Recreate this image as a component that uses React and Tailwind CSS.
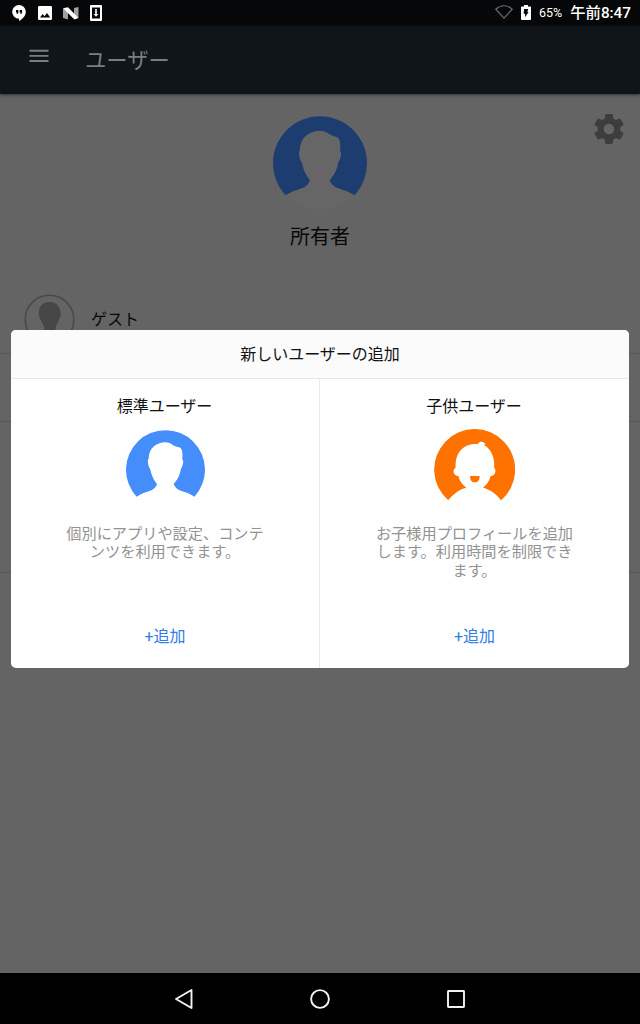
import React from "react";

function Person({ className, disc }) {
  return (
    <svg viewBox="39 47 282 282" className={className}>
      {disc && <circle cx="180" cy="188" r="141" fill="#666666" />}
      <path
        fill="currentColor"
        d="M77 285 A141 141 0 1 1 283 285 C268 275 250 268 232 263 C220 259 213 250 209 240 C218 230 227 216 231 203 C233 197 234 191 235 185 C238 182 240 177 241 172 C243 166 243 161 243 157 C243 154 241 152 240 151 C241 140 241 130 239 122 C237 114 233 110 228 109 C222 108 219 106 216 106 C214 104 211 102 208 102 C200 94 190 91 180 91 C163 91 148 97 138 106 C125 117 120 132 120 150 C118 151 117 153 117 157 C117 162 118 168 119 173 C120 178 122 182 125 185 C127 191 128 198 130 204 C134 218 142 230 150 240 C146 250 140 259 128 263 C110 268 92 275 77 285 Z"
      />
    </svg>
  );
}

function Child({ className }) {
  return (
    <svg viewBox="74 148 240 240" className={className} fill="currentColor">
      <path d="M116 359 A120 120 0 1 1 273 359 C259 341 242 328 219 321 C230 314 239 301 241 288 C250 287 256 280 256 273 C256 269 255 266 252 263 C253 250 252 238 249 230 C244 213 234 202 221 195 L227 193 C223 187 215 184 209 187 C205 189 204 192 204 193 C184 190 164 198 151 213 C140 226 137 244 138 263 C134 266 132 269 132 273 C132 281 139 287 147 288 C149 301 158 314 170 321 C148 327 131 341 116 359 Z" />
      <path d="M181 287 H209 C210 299 204 306 195 306 S180 299 181 287 Z" />
    </svg>
  );
}

function StatusBar() {
  return (
    <div className="flex h-[26px] shrink-0 items-center bg-[#060708] pl-[12px] pr-[9px] text-white">
      <svg width="14" height="16" viewBox="0 0 14 16">
        <path fill="#fff" d="M7 0A6.8 6.8 0 0 0 7 13.7V16C10.8 14 13.8 10.8 13.8 6.8A6.8 6.8 0 0 0 7 0Z" />
        <path fill="#060708" d="M4 5h2.4v2.4L5.5 9h-1l.5-1.6H4zM7.7 5h2.4v2.4L9.2 9h-1l.5-1.6h-1z" />
      </svg>
      <svg width="14" height="14" viewBox="0 0 14 14" className="ml-[12px]">
        <rect width="14" height="14" rx="1.3" fill="#fff" />
        <path fill="#060708" d="M2 11.5 4.7 8l1.8 2.2L9 7l3.2 4.500z" />
      </svg>
      <svg width="16" height="13" viewBox="0 0 16 13" className="ml-[11px]">
        <path fill="#a0a0a0" d="M0 1.500 5 4v8.500L0 11zM11 1 15.500 0v11L11 9z" />
        <path fill="#fff" d="M0 1.300 5 .2 15.500 11 11.500 12.600z" />
      </svg>
      <svg width="12" height="16" viewBox="0 0 12 16" className="ml-[11px]">
        <rect width="12" height="16" rx="1" fill="#fff" />
        <path fill="#060708" d="M2 2.500h8v11H2z" />
        <path fill="#fff" d="M5.200 4h1.600v5h1.700L6 11.700 3.500 9h1.700z" />
      </svg>
      <svg width="18" height="14" viewBox="0 0 18 14" className="-mt-[2px] ml-auto" fill="none" stroke="#6b6b6b" strokeWidth="1.200">
        <path d="M.8 4.200C5.800-.4 12.200-.4 17.200 4.200L9 13.200Z" />
      </svg>
      <svg width="10" height="15" viewBox="0 0 10 15" className="-mt-[2px] ml-[8px]">
        <path fill="#fff" d="M3 0h4v1.400h2.200q.8 0 .8.8v12q0 .8-.8.8H.8q-.8 0-.8-.8V2.200q0-.8.8-.8H3z" />
        <path fill="#060708" d="M3 4h4.200L6.400 7h1.200L4.100 12.300V8.700H2.700z" />
      </svg>
      <span className="mt-px ml-[8px] text-[12.500px] leading-none">65%</span>
      <span className="mt-px ml-[8px] text-[15.300px] leading-none font-medium whitespace-nowrap">午前8:47</span>
    </div>
  );
}

function Header() {
  return (
    <header className="relative flex h-[68px] shrink-0 items-center bg-[#0f1518] pl-[29px] text-[#7b7e80] shadow-[0_1px_3px_#333]">
      <svg width="20" height="14" viewBox="0 0 20 14" className="-mt-[8px]" fill="currentColor">
        <path d="M.5 .8h19v1.900H.5zM.5 5.900h19v1.900H.5zM.5 11h19v1.900H.5z" />
      </svg>
      <h1 className="mt-[2px] ml-[36px] text-[21.300px] leading-none font-normal">ユーザー</h1>
    </header>
  );
}

function UserOption({ title, icon, lines, className }) {
  return (
    <section className={`flex flex-col items-center ${className}`}>
      <h3 className="mt-[17px] text-[16px] leading-[22px] text-[#111]">{title}</h3>
      <div className="mt-[11px] flex h-[82px] items-start justify-center">{icon}</div>
      <p className="mt-[14px] h-[60px] pl-px text-center text-[15.200px] leading-[18.300px] whitespace-nowrap text-[#929292]">
        {lines.map((line) => (
          <span key={line} className="block">{line}</span>
        ))}
      </p>
      <button className="mt-[41px] pl-px text-[16px] leading-[22px] text-[#2f7ee8]">+追加</button>
    </section>
  );
}

function AddUserDialog() {
  return (
    <div className="absolute top-[330px] left-[11px] flex h-[338px] w-[618px] flex-col overflow-hidden rounded-[5px] bg-white">
      <h2 className="flex h-[49px] shrink-0 items-center justify-center border-b border-[#e6e6e6] bg-[#fbfbfb] pt-[2px] text-[16px] text-[#111]">
        新しいユーザーの追加
      </h2>
      <div className="grid flex-1 grid-cols-2">
        <UserOption
          className="border-r border-[#e8e8e8] pr-px"
          title="標準ユーザー"
          icon={<Person className="mt-px ml-px h-[79px] w-[79px] text-[#468dfc]" />}
          lines={["個別にアプリや設定、コンテ", "ンツを利用できます。"]}
        />
        <UserOption
          className="pr-px"
          title="子供ユーザー"
          icon={<Child className="h-[81px] w-[81px] text-[#ff7200]" />}
          lines={["お子様用プロフィールを追加", "します。利用時間を制限でき", "ます。"]}
        />
      </div>
    </div>
  );
}

export default function App() {
  return (
    <div
      lang="ja"
      className="relative flex h-[1024px] w-[640px] flex-col overflow-hidden bg-[#646464] font-[Roboto,'Noto_Sans_CJK_JP',sans-serif]"
    >
      <StatusBar />
      <Header />
      <main className="flex flex-1 flex-col">
        <div className="grid h-[182px] grid-cols-[60px_1fr_60px]">
          <span />
          <div className="flex flex-col items-center">
            <Person disc className="mt-[22px] h-[94px] w-[94px] text-[#1d3c70]" />
            <h2 className="mt-[13px] text-[20px] leading-[28px] text-[#080808]">所有者</h2>
          </div>
          <svg width="36" height="36" viewBox="0 0 24 24" className="mt-[17px] ml-[11px]" fill="#3d3d3d">
            <path d="M19.430 12.980c.04-.32.07-.64.07-.98s-.03-.66-.07-.98l2.110-1.650c.19-.15.24-.42.12-.64l-2-3.460c-.12-.22-.39-.3-.61-.22l-2.490 1c-.52-.4-1.080-.73-1.690-.98l-.38-2.650A.488.488 0 0 0 14 2h-4c-.25 0-.46.18-.49.42l-.38 2.650c-.61.25-1.170.59-1.690.98l-2.490-1c-.23-.09-.49 0-.61.22l-2 3.460c-.13.22-.07.49.12.64l2.110 1.650c-.04.32-.07.65-.07.98s.03.66.07.98l-2.110 1.650c-.19.15-.24.42-.12.64l2 3.460c.12.22.39.3.61.22l2.490-1c.52.4 1.080.73 1.690.98l.38 2.650c.03.24.24.42.49.42h4c.25 0 .46-.18.49-.42l.38-2.650c.61-.25 1.170-.59 1.690-.98l2.490 1c.23.09.49 0 .61-.22l2-3.460c.12-.22.07-.49-.12-.64zM12 15.500a3.500 3.500 0 1 1 0-7 3.500 3.500 0 0 1 0 7z" />
          </svg>
        </div>
        <div className="flex h-[78px] items-center border-b border-[#575757] pt-[10px] pl-[24px]">
          <svg width="51" height="51" viewBox="0 0 51 51">
            <circle cx="25.500" cy="25.500" r="24.300" fill="none" stroke="#494949" strokeWidth="1.600" />
            <path fill="#474747" d="M25.500 8C18.500 8 14.500 12.500 14.800 20c.2 5 4.700 9 5.700 15l-1 3c-3 1-7 2-9 4 8 8 23 8 31 0-2-2-6-3-9-4l-1-3c1-6 5-10 5.200-15C36.500 12.500 32.500 8 25.500 8z" />
          </svg>
          <span className="ml-[16px] text-[16px] leading-none text-[#080808]">ゲスト</span>
        </div>
        <div className="h-[68px] border-b border-[#575757]" />
        <div className="h-[151px] border-b border-[#575757]" />
      </main>
      <nav className="flex h-[51px] shrink-0 items-center justify-center gap-[116px] bg-black">
        <svg width="20" height="22" viewBox="0 0 20 22" fill="none" stroke="#f2f2f2" strokeWidth="1.900">
          <path d="M17.500 2v18L2 11z" strokeLinejoin="round" />
        </svg>
        <svg width="20" height="22" viewBox="0 0 20 22" fill="none" stroke="#f2f2f2" strokeWidth="1.900">
          <circle cx="10" cy="11" r="8.900" />
        </svg>
        <svg width="20" height="22" viewBox="0 0 20 22" fill="none" stroke="#f2f2f2" strokeWidth="1.900">
          <rect x="2" y="3" width="16" height="16" rx=".5" />
        </svg>
      </nav>
      <AddUserDialog />
    </div>
  );
}
